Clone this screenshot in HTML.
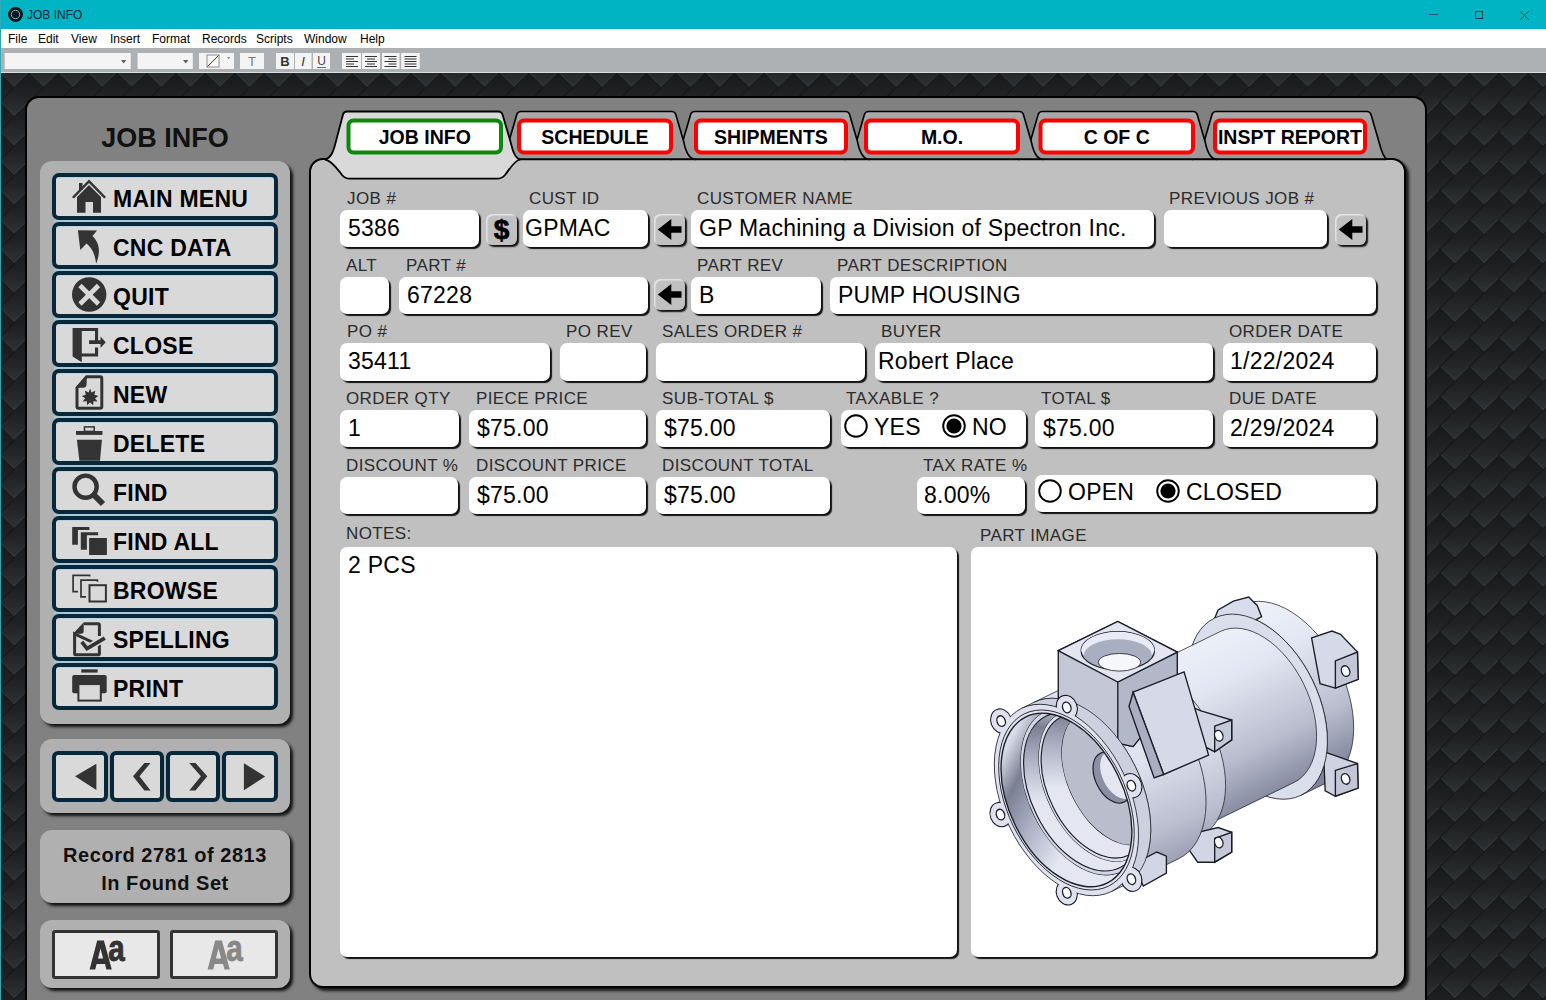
<!DOCTYPE html>
<html><head><meta charset="utf-8">
<style>
*{box-sizing:border-box;margin:0;padding:0}
html,body{width:1546px;height:1000px;overflow:hidden;font-family:"Liberation Sans",sans-serif}
body{position:relative;background:#202224}
.abs{position:absolute}
#bg{position:absolute;left:0;top:72px;width:1546px;height:928px}
#title{left:0;top:0;width:1546px;height:29px;background:#00b4c4}
#menu{left:0;top:29px;width:1546px;height:19px;background:#fff}
#tool{left:0;top:48px;width:1546px;height:25px;background:#aeb1b4;border-bottom:1px solid #dcdee0}
.mi{position:absolute;top:3px;font-size:12px;color:#000}
#outer{left:25px;top:96px;width:1402px;height:960px;border:2px solid #000;border-radius:14px;background:#818181}
.sub{position:absolute;background:#b0b0b0;border-radius:12px;box-shadow:3px 3px 3px rgba(0,0,0,.85)}
.btn{position:absolute;left:52px;width:226px;height:47px;border:4px solid #06283a;border-radius:7px;background:#d9d9d9;box-shadow:inset 0 1px 0 #b8d4e4}
.btn span{position:absolute;left:57px;top:9px;font-weight:bold;font-size:23px;color:#000;white-space:nowrap;letter-spacing:.25px}
.btn svg{position:absolute}
.nb{position:absolute;top:751px;height:51px;border:4px solid #06283a;border-radius:6px;background:#d9d9d9}
#content{left:309px;top:158px;width:1097px;height:830px;border:2px solid #000;border-radius:14px;background:#c0c0c0;box-shadow:3px 3px 3px rgba(0,0,0,.8)}
.lbl{position:absolute;font-size:17px;color:#2b2b2b;white-space:nowrap;letter-spacing:.4px;margin-top:1px}
.fld{position:absolute;background:#fff;border-radius:7px;box-shadow:2px 2px 1px #111}
.val{position:absolute;font-size:23px;color:#000;white-space:nowrap;margin-top:-1.5px;letter-spacing:.25px}
.sb{position:absolute;border-radius:6px;background:#c0c0c0;box-shadow:inset 1.5px 1.5px 1px #e4e4e4,2px 2px 1.5px #111}
</style></head><body>
<svg id="bg" width="1546" height="928">
<defs>
<linearGradient id="sg" x1="0" y1="0" x2="0" y2="1"><stop offset="0" stop-color="#17191a"/><stop offset="0.45" stop-color="#1f2122"/><stop offset="1" stop-color="#2f3234"/></linearGradient>
<pattern id="scales" x="-0.5" y="-5" width="29.4" height="29.4" patternUnits="userSpaceOnUse">
<rect width="29.4" height="29.4" fill="#161819"/>
<use href="#tile" x="-14.70" y="-8.90"/><use href="#tile" x="14.70" y="-8.90"/><use href="#tile" x="44.10" y="-8.90"/><use href="#tile" x="-14.70" y="20.50"/><use href="#tile" x="14.70" y="20.50"/><use href="#tile" x="44.10" y="20.50"/><use href="#tile" x="-14.70" y="49.90"/><use href="#tile" x="14.70" y="49.90"/><use href="#tile" x="44.10" y="49.90"/>
</pattern>
<g id="tile"><path d="M0,0 L-14.7,-14.7 L14.7,-44.099999999999994 L29.4,-29.4Z" fill="url(#sg)" stroke="#141617" stroke-width="1"/><path d="M-13.7,-14.399999999999999 L0,-0.9 L13.7,-14.399999999999999" fill="none" stroke="#3a3e40" stroke-width="1.3" stroke-linejoin="round"/></g>
</defs>
<rect width="1546" height="928" fill="url(#scales)"/>
</svg>
<div id="title" class="abs">
 <svg class="abs" style="left:8px;top:7px" width="15" height="15" viewBox="0 0 15 15"><circle cx="7.5" cy="7.5" r="7.5" fill="#0b1a20"/><circle cx="7.5" cy="7.5" r="4.2" fill="none" stroke="#6fb8c4" stroke-width="1"/></svg>
 <div class="abs" style="left:27px;top:8px;font-size:12px;color:#0d2a30">JOB INFO</div>
 <div class="abs" style="left:1429px;top:14px;width:9px;height:1px;background:#2a5a60"></div>
 <div class="abs" style="left:1475px;top:11px;width:8px;height:8px;border:1px solid #0d3a40"></div>
 <svg class="abs" style="left:1520px;top:11px" width="9" height="9"><path d="M0.3,0.3L8.7,8.7M8.7,0.3L0.3,8.7" stroke="#0d3a40" stroke-width="1"/></svg>
</div>
<div id="menu" class="abs">
 <span class="mi" style="left:8px">File</span><span class="mi" style="left:38px">Edit</span><span class="mi" style="left:71px">View</span><span class="mi" style="left:110px">Insert</span><span class="mi" style="left:152px">Format</span><span class="mi" style="left:202px">Records</span><span class="mi" style="left:256px">Scripts</span><span class="mi" style="left:304px">Window</span><span class="mi" style="left:360px">Help</span>
</div>
<div id="tool" class="abs"><svg class="abs" style="left:0;top:0" width="440" height="24">
<g fill="#f4f4f4"><rect x="4.7" y="5" width="126" height="16"/><rect x="137.6" y="5" width="55.2" height="16"/><rect x="199" y="5" width="35" height="16"/><rect x="240" y="5" width="24" height="16"/>
<rect x="276" y="5" width="18" height="16"/><rect x="295" y="5" width="16.5" height="16"/><rect x="313" y="5" width="17" height="16"/>
<rect x="342" y="5" width="19" height="16"/><rect x="362" y="5" width="18" height="16"/><rect x="382" y="5" width="17.5" height="16"/><rect x="401.2" y="5" width="18.5" height="16"/></g>
<g fill="#606060"><path d="M121,12 L126.4,12 L123.7,15.6Z"/><path d="M183,12 L188.4,12 L185.7,15.6Z"/><path d="M227,9.2 L230,9.2 L228.5,11Z"/></g>
<rect x="207" y="7" width="12" height="12" fill="#fff" stroke="#888" stroke-width="1"/>
<path d="M207.5,18.5 L218.5,7.5" stroke="#d01010" stroke-width="1"/>
<text x="252" y="18" text-anchor="middle" font-family="Liberation Sans" font-size="13" fill="#777">T</text>
<text x="285" y="18" text-anchor="middle" font-family="Liberation Sans" font-weight="bold" font-size="13" fill="#333">B</text>
<text x="303" y="18" text-anchor="middle" font-family="Liberation Sans" font-style="italic" font-size="13" fill="#333">I</text>
<text x="321.5" y="17" text-anchor="middle" font-family="Liberation Sans" font-size="12" fill="#444">U</text>
<path d="M317,19.5 L326,19.5" stroke="#444" stroke-width="0.8"/>
<g stroke="#333" stroke-width="1.1">
<path d="M346,8.5 H358 M346,11 H354 M346,13.5 H358 M346,16 H354 M346,18.5 H358"/>
<path d="M365,8.5 H377 M367,11 H375 M365,13.5 H377 M367,16 H375 M365,18.5 H377"/>
<path d="M384.5,8.5 H396.5 M388.5,11 H396.5 M384.5,13.5 H396.5 M388.5,16 H396.5 M384.5,18.5 H396.5"/>
<path d="M404.5,8.5 H416.5 M404.5,11 H416.5 M404.5,13.5 H416.5 M404.5,16 H416.5 M404.5,18.5 H416.5"/>
</g></svg></div>
<div id="outer" class="abs"></div>

<div class="abs" style="left:26px;top:123px;width:278px;text-align:center;font-weight:bold;font-size:27px;color:#111">JOB INFO</div>
<div class="sub" style="left:40px;top:161px;width:250px;height:563px"></div>
<div class="abs" style="left:54px;top:220px;width:222px;height:2px;background:#a8c6d4"></div>
<div class="abs" style="left:54px;top:269px;width:222px;height:2px;background:#a8c6d4"></div>
<div class="abs" style="left:54px;top:318px;width:222px;height:2px;background:#a8c6d4"></div>
<div class="abs" style="left:54px;top:367px;width:222px;height:2px;background:#a8c6d4"></div>
<div class="abs" style="left:54px;top:416px;width:222px;height:2px;background:#a8c6d4"></div>
<div class="abs" style="left:54px;top:465px;width:222px;height:2px;background:#a8c6d4"></div>
<div class="abs" style="left:54px;top:514px;width:222px;height:2px;background:#a8c6d4"></div>
<div class="abs" style="left:54px;top:563px;width:222px;height:2px;background:#a8c6d4"></div>
<div class="abs" style="left:54px;top:612px;width:222px;height:2px;background:#a8c6d4"></div>
<div class="abs" style="left:54px;top:661px;width:222px;height:2px;background:#a8c6d4"></div>
<div class="btn" style="top:173px"><span>MAIN MENU</span></div>
<div class="btn" style="top:222px"><span>CNC DATA</span></div>
<div class="btn" style="top:271px"><span>QUIT</span></div>
<div class="btn" style="top:320px"><span>CLOSE</span></div>
<div class="btn" style="top:369px"><span>NEW</span></div>
<div class="btn" style="top:418px"><span>DELETE</span></div>
<div class="btn" style="top:467px"><span>FIND</span></div>
<div class="btn" style="top:516px"><span>FIND ALL</span></div>
<div class="btn" style="top:565px"><span>BROWSE</span></div>
<div class="btn" style="top:614px"><span>SPELLING</span></div>
<div class="btn" style="top:663px"><span>PRINT</span></div>
<svg class="abs" style="left:0;top:0" width="310" height="720" fill="#333">
 <!-- home -->
 <path d="M89,179.5 L72,197 L73.8,198.6 L89,183 L104.2,198.6 L106,197Z"/>
 <path d="M89,185 L77,197 L77,212.8 L85.5,212.8 L85.5,202 L93,202 L93,212.8 L101,212.8 L101,197Z"/>
 <rect x="79" y="183" width="3.5" height="7"/>
 <!-- cnc arrow -->
 <path d="M77.9,230.2 L97.1,230.5 L92.5,236 C98.5,242 101.5,250 96.1,263.8 C95,253 91,247 86.5,243.5 L80.3,249.9Z"/>
 <!-- quit -->
 <circle cx="89.2" cy="294.5" r="17.2"/>
 <path d="M80,285.5 L98.5,304 M98.5,285.5 L80,304" stroke="#d9d9d9" stroke-width="4.6"/>
 <!-- close -->
 <path d="M72.6,328 L98.1,328 L98.1,343 L95,343 L95,331 L81.8,331 L81.8,353.5 L95,353.5 L95,347.5 L98.1,347.5 L98.1,356.5 L81.8,356.5 L81.8,362.3 L72.6,356.5Z"/>
 <path d="M89.1,340.2 L100.5,340.2 L100.5,336.4 L105.7,342.2 L100.5,347.9 L100.5,344 L89.1,344Z"/>
 <!-- new -->
 <path d="M86.6,376.8 L100,376.8 Q101.8,376.8 101.8,378.6 L101.8,406.5 Q101.8,408.3 100,408.3 L78.8,408.3 Q77,408.3 77,406.5 L77,387.7Z" fill="none" stroke="#333" stroke-width="3"/>
 <path d="M86.6,375.5 L86.6,384 Q86.6,387.7 83,387.7 L75.5,387.7Z"/>
 <path d="M90.1,388.5 L91.5,392.5 L95.3,390.8 L94.4,394.8 L98.5,395.9 L95,398.2 L97.6,401.4 L93.4,401.2 L93.2,405.3 L90.1,402.5 L87,405.3 L86.8,401.2 L82.6,401.4 L85.2,398.2 L81.7,395.9 L85.8,394.8 L84.9,390.8 L88.7,392.5Z"/>
 <!-- delete -->
 <rect x="84.5" y="426.9" width="9.7" height="4.5" fill="none" stroke="#333" stroke-width="1.5"/>
 <rect x="76" y="431" width="26.4" height="3.9"/>
 <path d="M76.9,439.7 L101.9,439.7 L100,460.8 L79.4,460.8Z"/>
 <!-- find -->
 <circle cx="85.6" cy="486.7" r="11.1" fill="none" stroke="#333" stroke-width="4.4"/>
 <path d="M93.5,494.5 L103,504" stroke="#333" stroke-width="6"/>
 <!-- find all -->
 <path d="M72.2,527.1 L89.4,527.1 L89.4,530 L77.9,530 L77.9,544.7 L72.2,544.7Z"/>
 <path d="M80.8,532.2 L98.1,532.2 L98.1,535.3 L86.9,535.3 L86.9,549.7 L80.8,549.7Z"/>
 <rect x="89.1" y="538" width="17.8" height="17"/>
 <!-- browse -->
 <path d="M89.6,576.5 L89.6,575.4 L73.1,575.4 L73.1,591.6 L78,591.6" fill="none" stroke="#333" stroke-width="1.7"/>
 <path d="M97.4,581.8 L97.4,580.2 L81,580.2 L81,596.8 L86,596.8" fill="none" stroke="#333" stroke-width="1.7"/>
 <rect x="89.5" y="585.2" width="16.4" height="16.3" fill="none" stroke="#333" stroke-width="2"/>
 <!-- spelling -->
 <path d="M83.7,623.7 L98,623.7 Q99.4,623.7 99.4,625.1 L99.4,636 M99.4,645.5 L99.4,653.4 Q99.4,654.8 98,654.8 L76,654.8 Q74.6,654.8 74.6,653.4 L74.6,633.8Z" fill="none" stroke="#333" stroke-width="3"/>
 <path d="M83.7,622.2 L83.7,631 Q83.7,633.8 81,633.8 L73.1,633.8Z"/>
 <path d="M81.8,641.9 L87,648.6 L104.8,638.1" fill="none" stroke="#d9d9d9" stroke-width="7"/>
 <path d="M81.8,641.9 L87,648.6 L104.8,638.1" fill="none" stroke="#333" stroke-width="3.8"/>
 <!-- print -->
 <rect x="81.3" y="669.3" width="16.3" height="3.3"/>
 <rect x="72.2" y="675" width="34.5" height="18.3" rx="2"/>
 <rect x="78.4" y="684.1" width="22.4" height="16.5" fill="#d9d9d9" stroke="#333" stroke-width="2"/>
</svg>
<div class="sub" style="left:40px;top:739px;width:250px;height:74px"></div>
<div class="nb" style="left:52px;width:56px"></div>
<div class="nb" style="left:110px;width:54px"></div>
<div class="nb" style="left:166px;width:54px"></div>
<div class="nb" style="left:222px;width:56px"></div>
<svg class="abs" style="left:0;top:740px" width="300" height="70" fill="#333">
 <path d="M75.1,36.3 L96.4,23.7 L96.4,49.9Z"/>
 <path d="M133,36.3 L144.4,22.9 L150.5,22.9 L139.5,36.3 L150.5,50.5 L144.4,50.5Z"/>
 <path d="M189.3,22.9 L195.5,22.9 L207.3,36.3 L195.5,50.5 L189.3,50.5 L200.9,36.3Z"/>
 <path d="M243.9,23.2 L265.2,36.5 L243.9,50.3Z"/>
</svg>
<div class="sub" style="left:40px;top:830px;width:250px;height:73px"></div>
<div class="abs" style="left:40px;top:842px;width:250px;text-align:center;font-weight:bold;font-size:20px;line-height:27.5px;color:#111;letter-spacing:.55px">Record 2781 of 2813<br>In Found Set</div>
<div class="sub" style="left:40px;top:920px;width:250px;height:68px"></div>
<div class="abs" style="left:52px;top:930px;width:108px;height:49px;border:3.5px solid #333;border-radius:3px;background:#e8e8e8"></div>
<div class="abs" style="left:170px;top:930px;width:108px;height:49px;border:3.5px solid #333;border-radius:3px;background:#e8e8e8"></div>
<svg class="abs" style="left:0;top:920px" width="300" height="70">
<g fill="#333" style="color:#333"><path fill-rule="evenodd" d="M89.6,49.4 L97.2,20.6 L103.9,20.6 L111.8,49.4 L106.4,49.4 L105,44 L96.6,44 L95.2,49.4Z M98,38.6 L103.1,38.6 L100.5,28.5Z"/>
<text x="0" y="0" transform="translate(108.2,41.3) scale(0.8,1)" font-family="Liberation Sans" font-weight="bold" font-size="37" stroke="currentColor" stroke-width="0.9">a</text></g>
<g fill="#888" style="color:#888"><path fill-rule="evenodd" d="M207.6,49.4 L215.2,20.6 L221.9,20.6 L229.8,49.4 L224.4,49.4 L223,44 L214.6,44 L213.2,49.4Z M216,38.6 L221.1,38.6 L218.5,28.5Z"/>
<text x="0" y="0" transform="translate(226.2,41.3) scale(0.8,1)" font-family="Liberation Sans" font-weight="bold" font-size="37" stroke="currentColor" stroke-width="0.9">a</text></g>
</svg>
<div id="content" class="abs"></div>
<svg class="abs" style="left:0;top:0" width="1546" height="200"><defs><linearGradient id="tg" x1="0" y1="0" x2="0" y2="1"><stop offset="0" stop-color="#adadad"/><stop offset="0.25" stop-color="#9e9e9e"/><stop offset="1" stop-color="#9a9a9a"/></linearGradient></defs>
<path d="M1192.0,159.5 C1199.0,159.5 1202.0,152 1204.0,142 L1212.0,114.5 Q1213.0,111.5 1216.0,111.5 L1367.0,111.5 Q1370.0,111.5 1371.0,114.5 L1379.0,142 C1381.0,150 1383.0,157 1387.0,159.5" fill="url(#tg)" stroke="#000" stroke-width="1.6"/>
<path d="M1018.2,159.5 C1025.2,159.5 1028.2,152 1030.2,142 L1038.2,114.5 Q1039.2,111.5 1042.2,111.5 L1193.2,111.5 Q1196.2,111.5 1197.2,114.5 L1205.2,142 C1207.2,152 1210.2,159.5 1217.2,159.5" fill="url(#tg)" stroke="#000" stroke-width="1.6"/>
<path d="M844.4000000000001,159.5 C851.4000000000001,159.5 854.4000000000001,152 856.4000000000001,142 L864.4000000000001,114.5 Q865.4000000000001,111.5 868.4000000000001,111.5 L1019.4000000000001,111.5 Q1022.4000000000001,111.5 1023.4000000000001,114.5 L1031.4,142 C1033.4,152 1036.4,159.5 1043.4,159.5" fill="url(#tg)" stroke="#000" stroke-width="1.6"/>
<path d="M670.6,159.5 C677.6,159.5 680.6,152 682.6,142 L690.6,114.5 Q691.6,111.5 694.6,111.5 L845.6,111.5 Q848.6,111.5 849.6,114.5 L857.6,142 C859.6,152 862.6,159.5 869.6,159.5" fill="url(#tg)" stroke="#000" stroke-width="1.6"/>
<path d="M496.79999999999995,159.5 C503.79999999999995,159.5 506.79999999999995,152 508.79999999999995,142 L516.8,114.5 Q517.8,111.5 520.8,111.5 L671.8,111.5 Q674.8,111.5 675.8,114.5 L683.8,142 C685.8,152 688.8,159.5 695.8,159.5" fill="url(#tg)" stroke="#000" stroke-width="1.6"/>
<path d="M519,159.3 L1386,159.3" stroke="#000" stroke-width="2"/>
<path d="M325,159.5 C331,158 333,152 335,145 L343,114.5 Q344,111.5 347,111.5 L498.5,111.5 Q501.5,111.5 502.5,114.5 L510.6,142 C513,152 515,158 520,159.5 C514,161 509,170 505,175 Q502,178.7 497,178.7 L350,178.7 Q345,178.7 342,175 C338,170 332,160.5 325,159.5Z" fill="#d9d9d9" stroke="#000" stroke-width="1.8"/>
<rect x="348.5" y="120.5" width="152.5" height="32" rx="5" fill="#fff" stroke="#0a8a0a" stroke-width="4"/>
<text x="424.75" y="143.5" text-anchor="middle" font-family="Liberation Sans" font-weight="bold" font-size="19.5">JOB INFO</text>
<rect x="519" y="120.5" width="152" height="32" rx="5" fill="#fff" stroke="#ff0000" stroke-width="4"/>
<text x="595.0" y="143.5" text-anchor="middle" font-family="Liberation Sans" font-weight="bold" font-size="19.5">SCHEDULE</text>
<rect x="696" y="120.5" width="150" height="32" rx="5" fill="#fff" stroke="#ff0000" stroke-width="4"/>
<text x="771.0" y="143.5" text-anchor="middle" font-family="Liberation Sans" font-weight="bold" font-size="19.5">SHIPMENTS</text>
<rect x="866" y="120.5" width="152" height="32" rx="5" fill="#fff" stroke="#ff0000" stroke-width="4"/>
<text x="942.0" y="143.5" text-anchor="middle" font-family="Liberation Sans" font-weight="bold" font-size="19.5">M.O.</text>
<rect x="1040.5" y="120.5" width="152.5" height="32" rx="5" fill="#fff" stroke="#ff0000" stroke-width="4"/>
<text x="1116.75" y="143.5" text-anchor="middle" font-family="Liberation Sans" font-weight="bold" font-size="19.5">C OF C</text>
<rect x="1215" y="120.5" width="150" height="32" rx="5" fill="#fff" stroke="#ff0000" stroke-width="4"/>
<text x="1290.0" y="143.5" text-anchor="middle" font-family="Liberation Sans" font-weight="bold" font-size="19.5">INSPT REPORT</text>
</svg>
<div class="lbl" style="left:347px;top:188px">JOB #</div>
<div class="lbl" style="left:529px;top:188px">CUST ID</div>
<div class="lbl" style="left:697px;top:188px">CUSTOMER NAME</div>
<div class="lbl" style="left:1169px;top:188px">PREVIOUS JOB #</div>
<div class="lbl" style="left:346px;top:255px">ALT</div>
<div class="lbl" style="left:406px;top:255px">PART #</div>
<div class="lbl" style="left:697px;top:255px">PART REV</div>
<div class="lbl" style="left:837px;top:255px">PART DESCRIPTION</div>
<div class="lbl" style="left:347px;top:321px">PO #</div>
<div class="lbl" style="left:566px;top:321px">PO REV</div>
<div class="lbl" style="left:662px;top:321px">SALES ORDER #</div>
<div class="lbl" style="left:881px;top:321px">BUYER</div>
<div class="lbl" style="left:1229px;top:321px">ORDER DATE</div>
<div class="lbl" style="left:346px;top:388px">ORDER QTY</div>
<div class="lbl" style="left:476px;top:388px">PIECE PRICE</div>
<div class="lbl" style="left:662px;top:388px">SUB-TOTAL $</div>
<div class="lbl" style="left:846px;top:388px">TAXABLE ?</div>
<div class="lbl" style="left:1041px;top:388px">TOTAL $</div>
<div class="lbl" style="left:1229px;top:388px">DUE DATE</div>
<div class="lbl" style="left:346px;top:455px">DISCOUNT %</div>
<div class="lbl" style="left:476px;top:455px">DISCOUNT PRICE</div>
<div class="lbl" style="left:662px;top:455px">DISCOUNT TOTAL</div>
<div class="lbl" style="left:923px;top:455px">TAX RATE %</div>
<div class="lbl" style="left:346px;top:523px">NOTES:</div>
<div class="lbl" style="left:980px;top:525px">PART IMAGE</div>
<div class="fld" style="left:340px;top:210px;width:139px;height:37px"></div>
<div class="val" style="left:348px;top:216px">5386</div>
<div class="fld" style="left:523px;top:210px;width:125px;height:37px"></div>
<div class="val" style="left:525px;top:216px">GPMAC</div>
<div class="fld" style="left:691px;top:210px;width:463px;height:37px"></div>
<div class="val" style="left:699px;top:216px">GP Machining a Division of Spectron Inc.</div>
<div class="fld" style="left:1164px;top:210px;width:163px;height:37px"></div>
<div class="fld" style="left:340px;top:277px;width:49px;height:37px"></div>
<div class="fld" style="left:399px;top:277px;width:249px;height:37px"></div>
<div class="val" style="left:407px;top:283px">67228</div>
<div class="fld" style="left:691px;top:277px;width:130px;height:37px"></div>
<div class="val" style="left:699px;top:283px">B</div>
<div class="fld" style="left:830px;top:277px;width:546px;height:37px"></div>
<div class="val" style="left:838px;top:283px">PUMP HOUSING</div>
<div class="fld" style="left:340px;top:343px;width:210px;height:38px"></div>
<div class="val" style="left:348px;top:349px">35411</div>
<div class="fld" style="left:560px;top:343px;width:86px;height:38px"></div>
<div class="fld" style="left:656px;top:343px;width:209px;height:38px"></div>
<div class="fld" style="left:875px;top:343px;width:338px;height:38px"></div>
<div class="val" style="left:878px;top:349px">Robert Place</div>
<div class="fld" style="left:1223px;top:343px;width:153px;height:38px"></div>
<div class="val" style="left:1230px;top:349px">1/22/2024</div>
<div class="fld" style="left:340px;top:410px;width:119px;height:37px"></div>
<div class="val" style="left:348px;top:416px">1</div>
<div class="fld" style="left:469px;top:410px;width:177px;height:37px"></div>
<div class="val" style="left:477px;top:416px">$75.00</div>
<div class="fld" style="left:656px;top:410px;width:174px;height:37px"></div>
<div class="val" style="left:664px;top:416px">$75.00</div>
<div class="fld" style="left:841px;top:410px;width:185px;height:37px"></div>
<div class="fld" style="left:1035px;top:410px;width:178px;height:37px"></div>
<div class="val" style="left:1043px;top:416px">$75.00</div>
<div class="fld" style="left:1223px;top:410px;width:153px;height:37px"></div>
<div class="val" style="left:1230px;top:416px">2/29/2024</div>
<div class="fld" style="left:340px;top:477px;width:118px;height:37px"></div>
<div class="fld" style="left:469px;top:477px;width:177px;height:37px"></div>
<div class="val" style="left:477px;top:483px">$75.00</div>
<div class="fld" style="left:656px;top:477px;width:174px;height:37px"></div>
<div class="val" style="left:664px;top:483px">$75.00</div>
<div class="fld" style="left:917px;top:477px;width:108px;height:37px"></div>
<div class="val" style="left:924px;top:483px">8.00%</div>
<div class="fld" style="left:1035px;top:475px;width:341px;height:37px"></div>
<div class="fld" style="left:340px;top:547px;width:617px;height:410px"></div>
<div class="fld" style="left:971px;top:547px;width:405px;height:410px"></div>
<div class="val" style="left:348px;top:553px">2 PCS</div>
<div class="sb" style="left:486px;top:214px;width:31px;height:31px"></div>
<div class="abs" style="left:486px;top:214px;width:31px;text-align:center;font-weight:bold;font-size:28px;color:#000;-webkit-text-stroke:.7px #000">$</div>
<div class="sb" style="left:654px;top:214px;width:31px;height:31px"></div>
<svg class="abs" style="left:654px;top:214px" width="31" height="31"><path d="M3.8,15.5 L17.3,5 L17.3,12.3 L27.5,12.3 L27.5,18.7 L17.3,18.7 L17.3,26Z" fill="#000"/></svg>
<div class="sb" style="left:654px;top:279px;width:31px;height:31px"></div>
<svg class="abs" style="left:654px;top:279px" width="31" height="31"><path d="M3.8,15.5 L17.3,5 L17.3,12.3 L27.5,12.3 L27.5,18.7 L17.3,18.7 L17.3,26Z" fill="#000"/></svg>
<div class="sb" style="left:1335px;top:214px;width:31px;height:31px"></div>
<svg class="abs" style="left:1335px;top:214px" width="31" height="31"><path d="M3.8,15.5 L17.3,5 L17.3,12.3 L27.5,12.3 L27.5,18.7 L17.3,18.7 L17.3,26Z" fill="#000"/></svg>
<svg class="abs" style="left:843px;top:413px" width="26" height="26"><circle cx="13" cy="13" r="10.8" fill="#fff" stroke="#000" stroke-width="1.9"/></svg>
<div class="val" style="left:874px;top:415px">YES</div>
<svg class="abs" style="left:941px;top:413px" width="26" height="26"><circle cx="13" cy="13" r="10.8" fill="#fff" stroke="#000" stroke-width="1.9"/><circle cx="13" cy="13" r="7.6" fill="#000"/></svg>
<div class="val" style="left:972px;top:415px">NO</div>
<svg class="abs" style="left:1037px;top:478px" width="26" height="26"><circle cx="13" cy="13" r="10.8" fill="#fff" stroke="#000" stroke-width="1.9"/></svg>
<div class="val" style="left:1068px;top:480px">OPEN</div>
<svg class="abs" style="left:1155px;top:478px" width="26" height="26"><circle cx="13" cy="13" r="10.8" fill="#fff" stroke="#000" stroke-width="1.9"/><circle cx="13" cy="13" r="7.6" fill="#000"/></svg>
<div class="val" style="left:1186px;top:480px">CLOSED</div>
<svg id="part" class="abs" style="left:980px;top:580px" width="400" height="340" viewBox="0 0 1176 1000">
<defs>
<linearGradient id="cylg" gradientUnits="userSpaceOnUse" x1="560" y1="200" x2="800" y2="680"><stop offset="0" stop-color="#eef1f9"/><stop offset="0.3" stop-color="#e2e6f2"/><stop offset="0.7" stop-color="#b9bdce"/><stop offset="1" stop-color="#80859a"/></linearGradient>
<linearGradient id="midg" gradientUnits="userSpaceOnUse" x1="420" y1="560" x2="560" y2="880"><stop offset="0" stop-color="#dfe3f0"/><stop offset="0.6" stop-color="#b9bdce"/><stop offset="1" stop-color="#8e93a6"/></linearGradient>
<linearGradient id="wallg" gradientUnits="userSpaceOnUse" x1="40" y1="560" x2="300" y2="700"><stop offset="0" stop-color="#d9dce9"/><stop offset="0.25" stop-color="#7a7f92"/><stop offset="0.6" stop-color="#aeb3c5"/><stop offset="1" stop-color="#e4e7f2"/></linearGradient>
<clipPath id="op0"><ellipse cx="254.0" cy="647.0" rx="272.0" ry="167.8" transform="rotate(64 254.0 647.0)"/></clipPath>
<clipPath id="op1"><ellipse cx="303.4" cy="622.9" rx="262.0" ry="161.7" transform="rotate(64 303.4 622.9)"/></clipPath>
<clipPath id="op2"><ellipse cx="339.4" cy="605.4" rx="238.0" ry="146.8" transform="rotate(64 339.4 605.4)"/></clipPath>
<clipPath id="op3"><ellipse cx="388.8" cy="581.2" rx="212.0" ry="130.8" transform="rotate(64 388.8 581.2)"/></clipPath>
</defs>
<path d="M943.8,633.2 L1021.1,595.5 A290.0,178.9 64 0 0 766.8,74.2 L689.5,111.9 A290.0,178.9 64 0 1 943.8,633.2Z" fill="url(#cylg)" stroke="#1b1d26" stroke-width="2.2"/>
<path d="M975,170 L1035,150 L1060,160 L1110,212 L1112,292 L1045,318 L1000,305Z" fill="#d6d9e7" stroke="#1b1d26" stroke-width="4"/>
<path d="M1045,238 L1110,212 L1112,292 L1045,318Z" fill="#c2c6d6" stroke="#1b1d26" stroke-width="4"/>
<ellipse cx="1075" cy="268" rx="12" ry="16" transform="rotate(-20 1075 268)" fill="#fbfcff" stroke="#1b1d26" stroke-width="4"/>
<path d="M1010,505 L1040,515 L1110,540 L1112,612 L1045,636 L1015,620Z" fill="#cfd2e0" stroke="#1b1d26" stroke-width="4"/>
<path d="M1045,560 L1110,540 L1112,612 L1045,636Z" fill="#c2c6d6" stroke="#1b1d26" stroke-width="4"/>
<ellipse cx="1075" cy="585" rx="12" ry="16" transform="rotate(-20 1075 585)" fill="#fbfcff" stroke="#1b1d26" stroke-width="4"/>
<path d="M688,118 L700,88 L745,62 L790,50 L815,75 L828,108 L770,140 L700,140Z" fill="#d9dcea" stroke="#1b1d26" stroke-width="4"/>
<ellipse cx="816.6" cy="372.6" rx="290.0" ry="178.9" transform="rotate(64 816.6 372.6)" fill="#dadeeb" stroke="#1b1d26" stroke-width="2.2"/>
<path d="M640.9,733.1 L924.9,594.6 A247.0,152.4 64 0 0 708.4,150.6 L424.3,289.1 A247.0,152.4 64 0 1 640.9,733.1Z" fill="url(#cylg)" stroke="#1b1d26" stroke-width="2.2"/>
<path d="M570.1,791.0 L650.1,752.0 A268.0,165.4 64 0 0 415.1,270.2 L335.2,309.2 A268.0,165.4 64 0 1 570.1,791.0Z" fill="url(#midg)" stroke="#1b1d26" stroke-width="2.2"/>
<path d="M600,365 L650,385 L740,412 L740,470 L690,505 L640,480Z" fill="#d2d5e3" stroke="#1b1d26" stroke-width="4"/>
<path d="M690,430 L740,412 L740,470 L690,505Z" fill="#c4c8d8" stroke="#1b1d26" stroke-width="4"/>
<ellipse cx="702" cy="458" rx="12" ry="16" transform="rotate(-20 702 458)" fill="#fbfcff" stroke="#1b1d26" stroke-width="4"/>
<path d="M612,790 L650,740 L700,728 L740,742 L740,800 L690,830 L640,830Z" fill="#d2d5e3" stroke="#1b1d26" stroke-width="4"/>
<path d="M690,760 L740,742 L740,800 L690,830Z" fill="#c4c8d8" stroke="#1b1d26" stroke-width="4"/>
<ellipse cx="702" cy="772" rx="12" ry="16" transform="rotate(-20 702 772)" fill="#fbfcff" stroke="#1b1d26" stroke-width="4"/>
<path d="M421.5,899.1 L584.1,819.8 A300.0,185.1 64 0 0 321.1,280.5 L158.4,359.8 A300.0,185.1 64 0 1 421.5,899.1Z" fill="url(#midg)" stroke="#1b1d26" stroke-width="2.2"/>
<path d="M452,835 L520,800 L548,812 L548,862 L480,900Z" fill="#d2d5e3" stroke="#1b1d26" stroke-width="4"/>
<path d="M230,208 L405,122 L580,212 L580,320 L450,490 L405,480 L230,400Z" fill="#c3c7d6" stroke="#1b1d26" stroke-width="4"/>
<path d="M405,300 L580,212 L580,330 L450,490 L405,480Z" fill="#b3b8c9" stroke="#1b1d26" stroke-width="4"/>
<path d="M230,208 L405,122 L580,212 L405,300Z" fill="#e3e6f1" stroke="#1b1d26" stroke-width="4"/>
<ellipse cx="405" cy="208" rx="108" ry="56" fill="#a9aec0" stroke="#1b1d26" stroke-width="3.4"/>
<path d="M297,208 A108,56 0 0 1 513,208 L505,222 A100,48 0 0 0 305,222Z" fill="#e8ebf5"/>
<ellipse cx="410" cy="242" rx="62" ry="26" fill="#f6f7fb" stroke="#1b1d26" stroke-width="2.4"/>
<path d="M450,330 L600,270 L672,515 L540,572Z" fill="#d6d9e7" stroke="#1b1d26" stroke-width="4"/>
<path d="M450,330 L540,572 L512,582 L438,372Z" fill="#a9aec0" stroke="#1b1d26" stroke-width="4"/>
<path d="M385.5,916.6 L421.5,899.1 A300.0,185.1 64 0 0 158.4,359.8 L122.5,377.4 A300.0,185.1 64 0 1 385.5,916.6Z" fill="#cdd1df" stroke="#1b1d26" stroke-width="2.2"/>
<ellipse cx="62" cy="415" rx="30" ry="36" transform="rotate(-20 62 415)" fill="#dfe2ee" stroke="#1b1d26" stroke-width="4"/>
<ellipse cx="255" cy="375" rx="30" ry="36" transform="rotate(-20 255 375)" fill="#dfe2ee" stroke="#1b1d26" stroke-width="4"/>
<ellipse cx="445" cy="605" rx="30" ry="36" transform="rotate(-20 445 605)" fill="#dfe2ee" stroke="#1b1d26" stroke-width="4"/>
<ellipse cx="445" cy="880" rx="30" ry="36" transform="rotate(-20 445 880)" fill="#dfe2ee" stroke="#1b1d26" stroke-width="4"/>
<ellipse cx="255" cy="920" rx="30" ry="36" transform="rotate(-20 255 920)" fill="#dfe2ee" stroke="#1b1d26" stroke-width="4"/>
<ellipse cx="60" cy="690" rx="30" ry="36" transform="rotate(-20 60 690)" fill="#dfe2ee" stroke="#1b1d26" stroke-width="4"/>
<ellipse cx="254.0" cy="647.0" rx="300.0" ry="185.1" transform="rotate(64 254.0 647.0)" fill="#dfe2ee" stroke="#1b1d26" stroke-width="2.2"/>
<ellipse cx="62" cy="415" rx="28.5" ry="34.5" transform="rotate(-20 62 415)" fill="#dfe2ee"/>
<ellipse cx="255" cy="375" rx="28.5" ry="34.5" transform="rotate(-20 255 375)" fill="#dfe2ee"/>
<ellipse cx="445" cy="605" rx="28.5" ry="34.5" transform="rotate(-20 445 605)" fill="#dfe2ee"/>
<ellipse cx="445" cy="880" rx="28.5" ry="34.5" transform="rotate(-20 445 880)" fill="#dfe2ee"/>
<ellipse cx="255" cy="920" rx="28.5" ry="34.5" transform="rotate(-20 255 920)" fill="#dfe2ee"/>
<ellipse cx="60" cy="690" rx="28.5" ry="34.5" transform="rotate(-20 60 690)" fill="#dfe2ee"/>
<ellipse cx="254.0" cy="647.0" rx="282.0" ry="174.0" transform="rotate(64 254.0 647.0)" fill="none" stroke="#1b1d26" stroke-width="2.4"/>
<g clip-path="url(#op0)"><rect x="0" y="0" width="1176" height="1000" fill="url(#wallg)"/><g clip-path="url(#op1)"><rect x="0" y="0" width="1176" height="1000" fill="#d3d7e5"/><ellipse cx="303.4" cy="622.9" rx="262.0" ry="161.7" transform="rotate(64 303.4 622.9)" fill="none" stroke="#1b1d26" stroke-width="3.4"/><ellipse cx="303.4" cy="622.9" rx="248.0" ry="153.0" transform="rotate(64 303.4 622.9)" fill="url(#wallg)" stroke="#1b1d26" stroke-width="3.4"/><g clip-path="url(#op2)"><ellipse cx="339.4" cy="605.4" rx="238.0" ry="146.8" transform="rotate(64 339.4 605.4)" fill="#dde1ee" stroke="#1b1d26" stroke-width="3.4"/><ellipse cx="339.4" cy="605.4" rx="226.0" ry="139.4" transform="rotate(64 339.4 605.4)" fill="url(#wallg)" stroke="#1b1d26" stroke-width="3.4"/><g clip-path="url(#op3)"><ellipse cx="388.8" cy="581.2" rx="212.0" ry="130.8" transform="rotate(64 388.8 581.2)" fill="#b9bdcc" stroke="#1b1d26" stroke-width="3.4"/><ellipse cx="388.8" cy="581.2" rx="80.0" ry="49.4" transform="rotate(64 388.8 581.2)" fill="#8a8fa3" stroke="#1b1d26" stroke-width="3.4"/><ellipse cx="406.8" cy="572.5" rx="76.0" ry="46.9" transform="rotate(64 406.8 572.5)" fill="#e4e7f1"/></g></g></g></g>
<ellipse cx="254.0" cy="647.0" rx="272.0" ry="167.8" transform="rotate(64 254.0 647.0)" fill="none" stroke="#1b1d26" stroke-width="4"/>
<ellipse cx="62" cy="415" rx="12" ry="16" transform="rotate(-20 62 415)" fill="#fbfcff" stroke="#1b1d26" stroke-width="4"/>
<ellipse cx="255" cy="375" rx="12" ry="16" transform="rotate(-20 255 375)" fill="#fbfcff" stroke="#1b1d26" stroke-width="4"/>
<ellipse cx="445" cy="605" rx="12" ry="16" transform="rotate(-20 445 605)" fill="#fbfcff" stroke="#1b1d26" stroke-width="4"/>
<ellipse cx="445" cy="880" rx="12" ry="16" transform="rotate(-20 445 880)" fill="#fbfcff" stroke="#1b1d26" stroke-width="4"/>
<ellipse cx="255" cy="920" rx="12" ry="16" transform="rotate(-20 255 920)" fill="#fbfcff" stroke="#1b1d26" stroke-width="4"/>
<ellipse cx="60" cy="690" rx="12" ry="16" transform="rotate(-20 60 690)" fill="#fbfcff" stroke="#1b1d26" stroke-width="4"/>

</svg>
<div id="lb" class="abs" style="left:0;top:0;width:1px;height:1000px;background:#2eaab6"></div>
</body></html>
